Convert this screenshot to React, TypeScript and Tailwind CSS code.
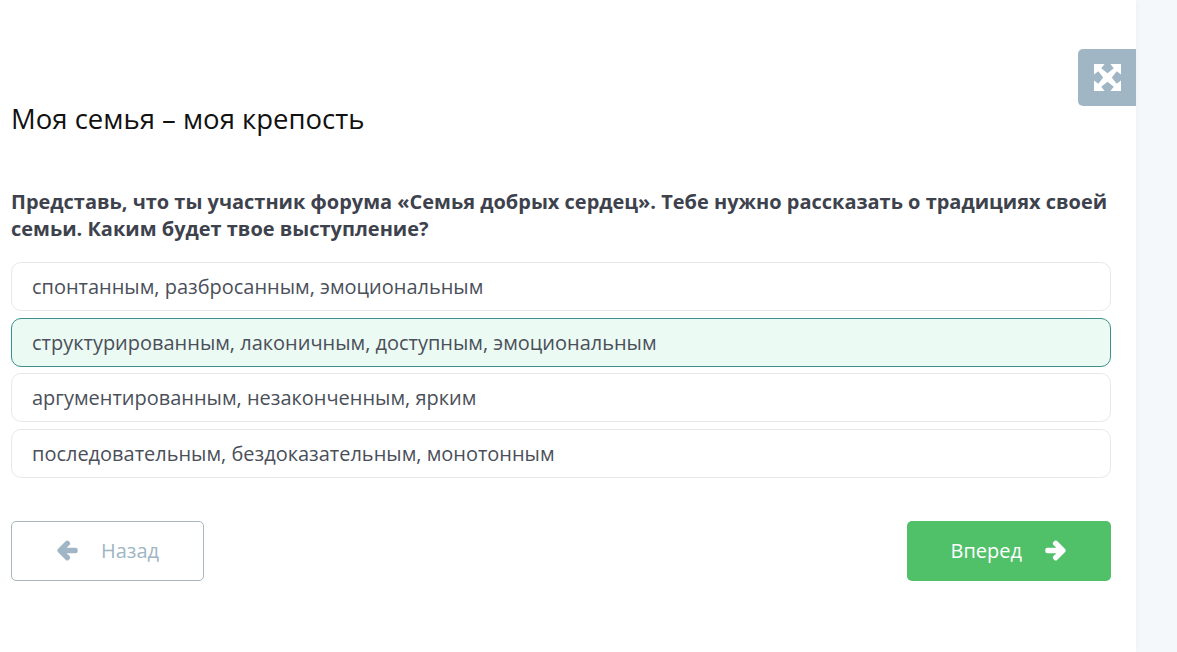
import { FaArrowLeft, FaArrowRight } from "react-icons/fa";

const options = [
  { text: "спонтанным, разбросанным, эмоциональным", selected: false },
  { text: "структурированным, лаконичным, доступным, эмоциональным", selected: true },
  { text: "аргументированным, незаконченным, ярким", selected: false },
  { text: "последовательным, бездоказательным, монотонным", selected: false },
];

export default function App() {
  return (
    <div className="flex h-[652px] w-[1177px] overflow-hidden bg-[#f5f8fb] font-['Open_Sans',sans-serif]">
      <main className="relative h-full w-[1136px] bg-white pl-[11px] pr-[25px] pt-[100px] shadow-[0_0_6px_rgba(0,0,0,0.04)]">
        <button className="absolute left-[1078px] top-[49px] flex h-[57px] w-[58px] items-center justify-center rounded-l-[5px] bg-[#a0b6c4] text-white">
          <svg width="27" height="27" viewBox="0 0 28 28" fill="currentColor">
            <path d="M0 0H11L7.5 4.5L14 9.5L20.5 4.5L17 0H28V11L23.5 7.5L18.5 14L23.5 20.5L28 17V28H17L20.5 23.5L14 18.5L7.5 23.5L11 28H0V17L4.5 20.5L9.5 14L4.5 7.5L0 11Z" />
          </svg>
        </button>
        <h1 className="text-[27.5px] leading-[38px] text-[#111] font-normal">Моя семья – моя крепость</h1>
        <p className="mt-[50px] text-[19.98px] font-bold leading-[27px] text-[#3d424d]">
          Представь, что ты участник форума «Семья добрых сердец». Тебе нужно рассказать о традициях своей семьи. Каким будет твое выступление?
        </p>
        <div className="mt-[20px] flex flex-col gap-[6.72px]">
          {options.map((o) => (
            <div
              key={o.text}
              className={
                o.selected
                  ? "flex h-[49px] items-center rounded-[10px] border border-[#3c8f8c] bg-[#ecfaf4] px-[20px] pt-[2px] text-[19.98px] text-[#4a4f59]"
                  : "flex h-[49px] items-center rounded-[10px] border border-[#e6e9eb] bg-white px-[20px] text-[19.98px] text-[#4a4f59]"
              }
            >
              {o.text}
            </div>
          ))}
        </div>
        <div className="mt-[42.84px] flex justify-between">
          <button className="flex h-[60px] w-[193px] items-center rounded-[5px] border border-[#a9b6bd] bg-white pl-[45px] text-[19.98px] text-[#a0b6c4]">
            <FaArrowLeft size={21} stroke="currentColor" strokeWidth={50} />
            <span className="ml-[23px]">Назад</span>
          </button>
          <button className="flex h-[60px] w-[204px] items-center rounded-[5px] bg-[#50c069] pl-[43.5px] text-[19.98px] text-white">
            <span>Вперед</span>
            <FaArrowRight size={21} stroke="currentColor" strokeWidth={50} className="ml-[23px]" />
          </button>
        </div>
      </main>
    </div>
  );
}
